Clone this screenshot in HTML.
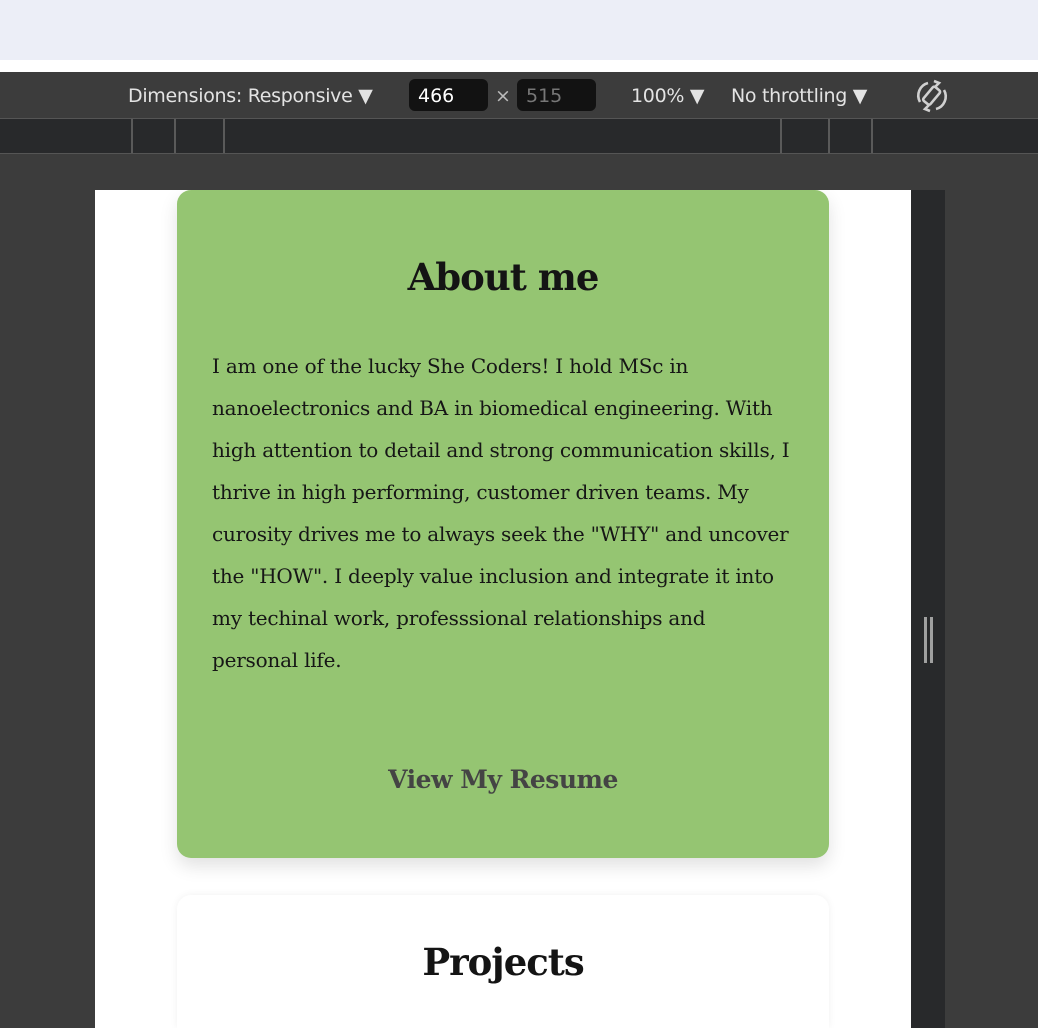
<!DOCTYPE html>
<html><head><meta charset="utf-8"><style>
*{margin:0;padding:0;box-sizing:border-box}
body{width:1038px;height:1028px;overflow:hidden;background:#3c3c3c;position:relative;font-family:"DejaVu Sans","Liberation Sans",sans-serif}
.top{position:absolute;left:0;top:0;width:1038px;height:60px;background:#eceef7}
.white{position:absolute;left:0;top:60px;width:1038px;height:12px;background:#fff}
.tb{position:absolute;left:0;top:72px;width:1038px;height:46px;background:#3c3c3c;color:#e3e3e3;font-size:19px}
.tb span{position:absolute;top:13px;white-space:nowrap;letter-spacing:-0.3px}
.box{position:absolute;top:7px;height:32px;background:#121212;border-radius:6px;font-size:19px;padding:6px 9px}
.ruler{position:absolute;left:0;top:118px;width:1038px;height:36px;background:#28292b;border-top:1px solid #555;border-bottom:1px solid #555}
.tick{position:absolute;top:0;width:2px;height:34px;background:#5a5a5a}
.vp{position:absolute;left:95px;top:190px;width:816px;height:838px;background:#fff;overflow:hidden}
.side{position:absolute;left:911px;top:190px;width:34px;height:838px;background:#28292b}
.h1,.h2{position:absolute;left:924px;top:617px;width:3px;height:46px;background:#a0a0a0}
.h2{left:930px}
.card{position:absolute;left:82px;top:0;width:652px;height:668px;background:#95c572;border-radius:14px;box-shadow:0 8px 18px rgba(0,0,0,.12)}
.card h2{position:absolute;top:65px;width:100%;text-align:center;font-family:"DejaVu Serif","Liberation Serif",serif;font-weight:bold;font-size:37px;color:#141414;letter-spacing:-1px}
.card p{position:absolute;left:35px;top:155px;font-family:"DejaVu Serif","Liberation Serif",serif;font-size:20px;line-height:42px;color:#161616;white-space:nowrap;letter-spacing:-0.22px}
.card .btn{position:absolute;top:575px;width:100%;text-align:center;font-family:"DejaVu Serif","Liberation Serif",serif;font-weight:bold;font-size:25px;color:#444;letter-spacing:-0.5px}
.card2{position:absolute;left:82px;top:705px;width:652px;height:133px;background:#fff;border-radius:14px 14px 0 0;box-shadow:0 0 8px rgba(0,0,0,.06)}
.card2 h2{position:absolute;top:45px;width:100%;text-align:center;font-family:"DejaVu Serif","Liberation Serif",serif;font-weight:bold;font-size:37px;color:#141414;letter-spacing:-1px}
</style></head><body>
<div class="top"></div><div class="white"></div>
<div class="tb">
<span style="left:128px">Dimensions: Responsive ▼</span>
<div class="box" style="left:409px;width:79px;color:#fff">466</div>
<span style="left:495px;color:#bbb">×</span>
<div class="box" style="left:517px;width:79px;color:#777">515</div>
<span style="left:631px">100% ▼</span>
<span style="left:731px">No throttling ▼</span>
<svg style="position:absolute;left:914px;top:6px" width="36" height="36" viewBox="0 0 36 36" fill="none" stroke="#d0d0d0" stroke-width="2.6">
<rect x="13" y="9" width="9" height="18" rx="2" transform="rotate(40 18 18)"/>
<path d="M6 24 A13 13 0 0 1 14 5"/><path d="M30 12 A13 13 0 0 1 22 31"/>
<path d="M20 3 L25 5 L21 9" /><path d="M16 33 L11 31 L15 27"/>
</svg>
</div>
<div class="ruler">
<div class="tick" style="left:131px"></div><div class="tick" style="left:174px"></div><div class="tick" style="left:223px"></div>
<div class="tick" style="left:780px"></div><div class="tick" style="left:828px"></div><div class="tick" style="left:871px"></div>
</div>
<div class="vp">
<div class="card">
<h2>About me</h2>
<p>I am one of the lucky She Coders! I hold MSc in<br>nanoelectronics and BA in biomedical engineering. With<br>high attention to detail and strong communication skills, I<br>thrive in high performing, customer driven teams. My<br>curosity drives me to always seek the "WHY" and uncover<br>the "HOW". I deeply value inclusion and integrate it into<br>my techinal work, professsional relationships and<br>personal life.</p>
<div class="btn">View My Resume</div>
</div>
<div class="card2"><h2>Projects</h2></div>
</div>
<div class="side"></div>
<div class="h1"></div><div class="h2"></div>
</body></html>
